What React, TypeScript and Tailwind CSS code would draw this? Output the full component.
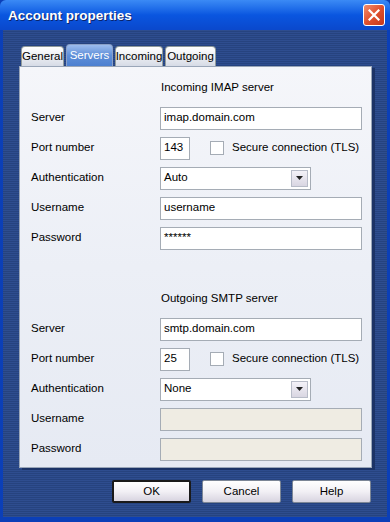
import React from "react";

const font = { fontFamily: '"Liberation Sans", Arial, sans-serif' };

const Input = ({ value, width = "w-[202px]", disabled = false }: { value?: string; width?: string; disabled?: boolean }) => (
  <div
    className={`${width} h-[23px] border border-[#a5acb5] px-[3px] flex items-center text-[11.5px] text-black ${
      disabled ? "bg-[#efece3]" : "bg-white"
    }`}
  >
    {value}
  </div>
);

const Select = ({ value }: { value: string }) => (
  <div className="w-[151px] h-[23px] border border-[#a5acb5] bg-white flex items-center justify-between pl-[3px] pr-[2px] text-[11.5px] text-black">
    <span>{value}</span>
    <div className="w-[17px] h-[17px] border border-[#b8bcc8] bg-gradient-to-b from-[#f4f2f8] to-[#d9d6e2] flex items-center justify-center">
      <svg width="7" height="4" viewBox="0 0 7 4">
        <path d="M0 0h7L3.5 4z" fill="#222" />
      </svg>
    </div>
  </div>
);

const Row = ({ label, children }: { label: string; children: React.ReactNode }) => (
  <div className="h-[30px] flex items-center">
    <div className="w-[140px] pl-[11px] text-[11.5px] text-black">{label}</div>
    {children}
  </div>
);

const PortRow = ({ port }: { port: string }) => (
  <Row label="Port number">
    <Input value={port} width="w-[30px]" />
    <div className="ml-[20px] w-[14px] h-[14px] border border-[#a5acb5] bg-white" />
    <span className="ml-[8px] text-[11.5px] text-black">Secure connection (TLS)</span>
  </Row>
);

const ServerBlock = ({
  title,
  server,
  port,
  auth,
  user,
  pass,
  disabled,
}: {
  title: string;
  server: string;
  port: string;
  auth: string;
  user?: string;
  pass?: string;
  disabled?: boolean;
}) => (
  <div className="flex flex-col">
    <div className="h-[30px] flex items-center pl-[141px] text-[11.5px] text-black">{title}</div>
    <Row label="Server">
      <Input value={server} />
    </Row>
    <PortRow port={port} />
    <Row label="Authentication">
      <Select value={auth} />
    </Row>
    <Row label="Username">
      <Input value={user} disabled={disabled} />
    </Row>
    <Row label="Password">
      <Input value={pass} disabled={disabled} />
    </Row>
  </div>
);

const Tab = ({ label, active, w }: { label: string; active?: boolean; w: string }) =>
  active ? (
    <div className={`${w} h-[22px] rounded-t-[4px] border border-b-0 border-[#8aa0c8] bg-gradient-to-b from-[#9cbcee] via-[#5f8fd8] to-[#4c7fd0] text-white text-[11.5px] flex items-center justify-center`}>
      {label}
    </div>
  ) : (
    <div className={`${w} h-[20px] rounded-t-[4px] border border-b-0 border-[#919b9c] bg-gradient-to-b from-[#ffffff] via-[#eceef2] to-[#d6dbe6] text-black text-[11.5px] flex items-center justify-center`}>
      {label}
    </div>
  );

const Button = ({ label, def }: { label: string; def?: boolean }) => (
  <div
    className={`w-[79px] h-[23px] rounded-[2px] flex items-center justify-center text-[11.5px] text-black bg-gradient-to-b from-[#ffffff] via-[#f2f0f5] to-[#d8d4e0] ${
      def ? "border-2 border-[#1a1a1a]" : "border border-[#7c8696]"
    }`}
  >
    {label}
  </div>
);

export default function App() {
  return (
    <div style={font} className="w-[390px] h-[522px] flex flex-col overflow-hidden bg-[#0b3fb8] select-none">
      {/* title bar */}
      <div className="h-[30px] shrink-0 flex items-center justify-between pl-[8px] pr-[5px] bg-gradient-to-b from-[#3b8af5] via-[#0a56e0] to-[#0a48cc] rounded-t-[6px]">
        <span className="pt-[3px] text-white font-bold text-[13.5px] [text-shadow:1px_1px_0_#0a246a]">
          Account properties
        </span>
        <div className="w-[22px] h-[22px] rounded-[3px] border border-white bg-gradient-to-br from-[#f08c6c] via-[#e0502e] to-[#c4381a] flex items-center justify-center">
          <svg width="12" height="12" viewBox="0 0 12 12">
            <path d="M1.5 1.5l9 9M10.5 1.5l-9 9" stroke="white" strokeWidth="2.2" strokeLinecap="square" />
          </svg>
        </div>
      </div>

      {/* body */}
      <div className="flex-1 flex flex-col mx-[3px] mb-[5px] pl-[16px] pr-[15px] bg-[repeating-linear-gradient(180deg,#2e4d8f_0px,#2e4d8f_1px,#26437f_1px,#26437f_2px)]">
        <div className="h-[36px] flex items-end pl-[2px] gap-[2px]">
          <Tab label="General" w="w-[43px]" />
          <Tab label="Servers" w="w-[47px]" active />
          <Tab label="Incoming" w="w-[48px]" />
          <Tab label="Outgoing" w="w-[51px]" />
        </div>

        <div className="h-[402px] border border-[#9aa6b8] bg-gradient-to-b from-[#f5f6fa] via-[#eceff6] to-[#e6eaf3] shadow-[3px_2px_0_#1c3366] pt-[6px]">
          <ServerBlock
            title="Incoming IMAP server"
            server="imap.domain.com"
            port="143"
            auth="Auto"
            user="username"
            pass="******"
          />
          <div className="h-[31px]" />
          <ServerBlock
            title="Outgoing SMTP server"
            server="smtp.domain.com"
            port="25"
            auth="None"
            disabled
          />
        </div>

        <div className="flex justify-end gap-[11px] pt-[12px] pr-[1px]">
          <Button label="OK" def />
          <Button label="Cancel" />
          <Button label="Help" />
        </div>
      </div>
    </div>
  );
}
